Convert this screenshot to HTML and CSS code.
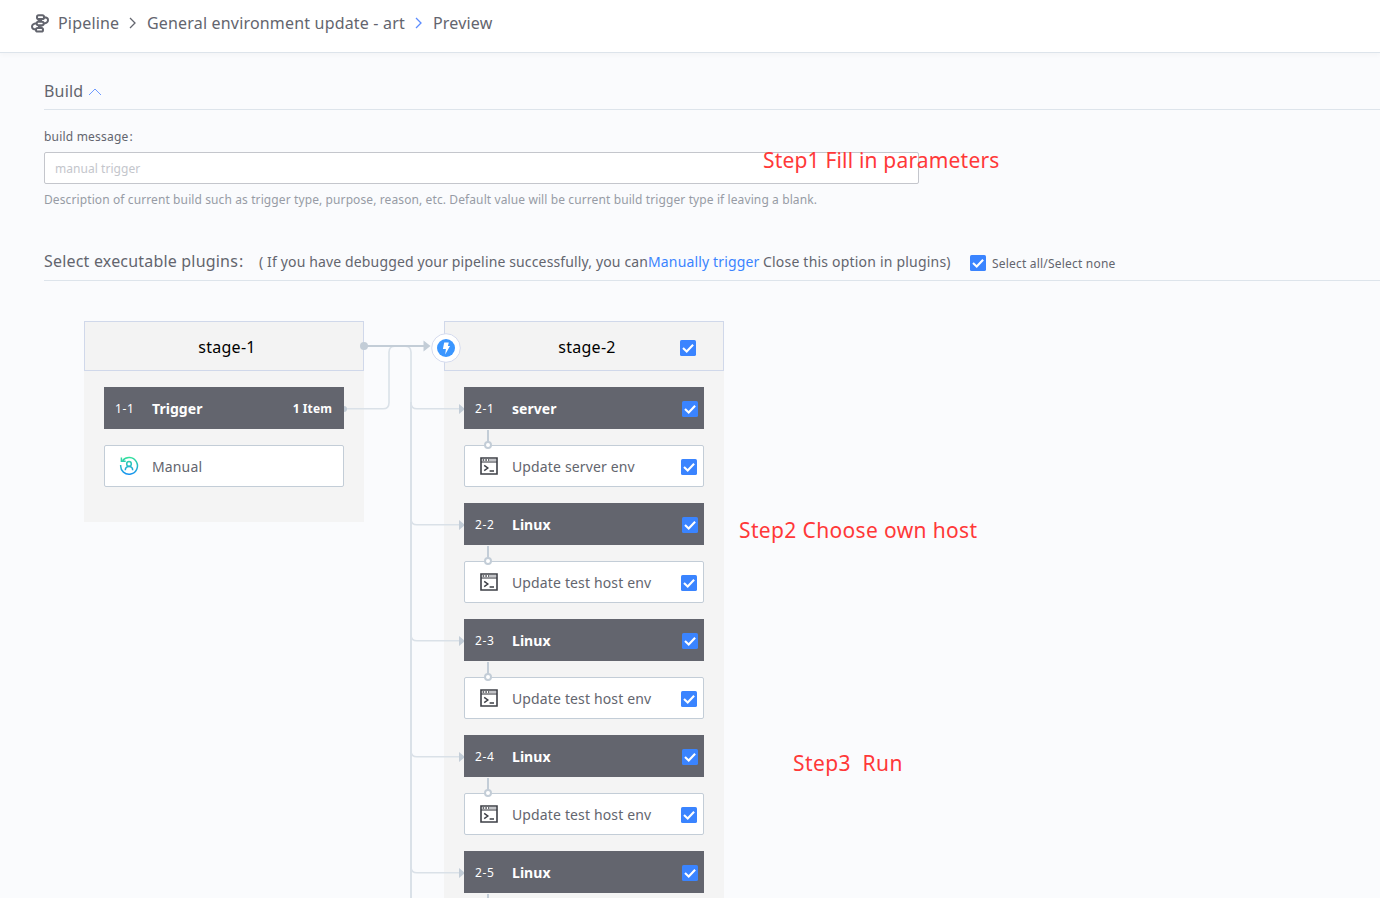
FILE: index.html
```html
<!DOCTYPE html>
<html lang="en">
<head>
<meta charset="utf-8">
<title>Pipeline - Preview</title>
<link rel="stylesheet" href="styles.css">
</head>
<body>
<svg class="defs" width="0" height="0">
  <symbol id="shell" viewBox="0 0 18 18">
    <path d="M1 1h16v16H1z" fill="#fff" stroke="#3e4047" stroke-width="1.6"/>
    <path d="M1 5h16" stroke="#3e4047" stroke-width="1.1"/>
    <path d="M2.6 3h1.6M5.3 3h1.6M8 3h1.4" stroke="#3e4047" stroke-width="1.3"/>
    <path d="M9.6 3H16" stroke="#b4b6bb" stroke-width="1.6"/>
    <path d="M4.2 8.3l3.6 2.7-3.6 2.7M9.6 14h4.4" fill="none" stroke="#3e4047" stroke-width="1.5"/>
  </symbol>
  <symbol id="check" viewBox="0 0 16 16">
    <rect width="16" height="16" rx="1.6" fill="#3a84ff"/>
    <path d="M3 8l3.700 3.500 6.400-6.800" fill="none" stroke="#fff" stroke-width="2.100"/>
  </symbol>
</svg>

<header class="header">
  <svg class="logo" width="18" height="19" viewBox="0 0 18 19" fill="none" stroke="#63656e" stroke-width="2">
    <rect x="6" y="1.300" width="7" height="3.700" rx="1.600"/>
    <rect x="5.700" y="7.800" width="7" height="3.400" rx="1.600"/>
    <rect x="5" y="13.900" width="7" height="3.700" rx="1.600"/>
    <path d="M13 3.200c2.400 0 4 1 4 2.700S15.600 9 12.700 9.500M7 5.600c1 .8 2.500 1 4 1M5.700 9.200C2.600 9.600 1 10.800 1 12.600s1.600 2.900 4 2.900M7 13c1.500-.2 3-.2 4.200.6"/>
  </svg>
  <span class="crumb crumb-root">Pipeline</span>
  <svg class="sep" width="7" height="12" viewBox="0 0 7 12"><path d="M1 1l5 5-5 5" fill="none" stroke="#63656e" stroke-width="1.3"/></svg>
  <span class="crumb crumb-name">General environment update - art</span>
  <svg class="sep" width="7" height="12" viewBox="0 0 7 12"><path d="M1 1l5 5-5 5" fill="none" stroke="#5b8cff" stroke-width="1.3"/></svg>
  <span class="crumb">Preview</span>
</header>

<main class="main">
  <section>
    <h2 class="title build-title">Build
      <svg width="14" height="8" viewBox="0 0 14 8"><path d="M1 7l6-6 6 6" fill="none" stroke="#6f9bff" stroke-width="1"/></svg>
    </h2>
    <label class="label" for="msg">build message<span class="colon">:</span></label>
    <input class="input" id="msg" placeholder="manual trigger">
    <p class="hint">Description of current build such as trigger type, purpose, reason, etc. Default value will be current build trigger type if leaving a blank.</p>
  </section>

  <section>
    <div class="title plugins-title">
      <span class="plugins-name">Select executable plugins<span class="colon">:</span></span>
      <span class="tip"><span class="tip-lead">( If you have debugged your pipeline successfully, you can</span><a class="link">Manually trigger</a><span class="tip-rest">Close this option in plugins)</span></span>
      <span class="all"><svg width="16" height="16"><use href="#check"/></svg><span class="all-text">Select all/Select none</span></span>
    </div>
  </section>

  <div class="pipeline">
    <svg class="wires" width="480" height="608" viewBox="0 290 480 608" fill="none">
      <g stroke="#dae1e8" stroke-width="1.6">
        <path d="M346 408.800h37q6 0 6-6v-50.500q0-6 6-6"/>
        <path d="M405 346.300q6 0 6 6v50.500q0 6 6 6h43"/>
        <path d="M411 402v496" stroke-width="2"/>
        <path d="M411 519q0 5.800 6 5.800h43M411 635q0 5.800 6 5.800h43M411 751q0 5.800 6 5.800h43M411 867q0 5.800 6 5.800h43"/>
      </g>
      <path d="M364 346h62" stroke="#c3cdd7" stroke-width="2"/>
      <g fill="#c3cdd7">
        <circle cx="364" cy="346" r="4"/>
        <circle cx="344" cy="409" r="3"/>
        <path d="M423.500 340.500l7 5.500-7 5.500zM459 404l6 5-6 5zM459 520l6 5-6 5zM459 636l6 5-6 5zM459 752l6 5-6 5zM459 868l6 5-6 5z"/>
      </g>
    </svg>

    <div class="stage">
      <div class="stage-head">stage-1</div>
      <div class="stage-body">
        <div class="job"><span class="num">1-1</span><b class="name">Trigger</b><b class="count">1 Item</b></div>
        <div class="atom">
          <svg class="icon icon-manual" width="20" height="20" viewBox="0 0 20 20" fill="none" stroke="url(#tri)" stroke-width="1.5">
            <defs><linearGradient id="tri" gradientUnits="userSpaceOnUse" x1="0" y1="1" x2="0" y2="19"><stop offset="0" stop-color="#35e29a"/><stop offset="1" stop-color="#1690f5"/></linearGradient></defs>
            <path d="M3.700 4.400A8.400 8.400 0 1 1 1.700 9M6.700 5.300H2.400V1.600"/>
            <circle cx="10" cy="7.900" r="2.300"/><path d="M6.300 14.300c0-5.100 7.400-5.100 7.400 0"/>
          </svg>
          <span class="name">Manual</span>
        </div>
      </div>
    </div>

    <div class="stage">
      <div class="stage-head">stage-2
        <svg class="stage-check" width="16" height="16"><use href="#check"/></svg>
        <svg class="bolt" width="30" height="30" viewBox="0 0 30 30"><circle cx="15" cy="15" r="14.300" fill="#fff" stroke="#d5dbee"/><circle cx="15" cy="15" r="9" fill="#3a96ff"/><path d="M13.200 9.600h4.600l-.9 3.500h2.100l-4.800 8.500.7-5.600h-3z" fill="#fff"/></svg>
      </div>
      <div class="stage-body">
        <div class="job"><span class="num">2-1</span><b class="name">server</b><svg class="box" width="16" height="16"><use href="#check"/></svg></div>
        <div class="atom linked"><svg class="icon" width="18" height="18"><use href="#shell"/></svg><span class="name">Update server env</span><svg class="box" width="16" height="16"><use href="#check"/></svg></div>
        <div class="job"><span class="num">2-2</span><b class="name">Linux</b><svg class="box" width="16" height="16"><use href="#check"/></svg></div>
        <div class="atom linked"><svg class="icon" width="18" height="18"><use href="#shell"/></svg><span class="name">Update test host env</span><svg class="box" width="16" height="16"><use href="#check"/></svg></div>
        <div class="job"><span class="num">2-3</span><b class="name">Linux</b><svg class="box" width="16" height="16"><use href="#check"/></svg></div>
        <div class="atom linked"><svg class="icon" width="18" height="18"><use href="#shell"/></svg><span class="name">Update test host env</span><svg class="box" width="16" height="16"><use href="#check"/></svg></div>
        <div class="job"><span class="num">2-4</span><b class="name">Linux</b><svg class="box" width="16" height="16"><use href="#check"/></svg></div>
        <div class="atom linked"><svg class="icon" width="18" height="18"><use href="#shell"/></svg><span class="name">Update test host env</span><svg class="box" width="16" height="16"><use href="#check"/></svg></div>
        <div class="job job-last"><span class="num">2-5</span><b class="name">Linux</b><svg class="box" width="16" height="16"><use href="#check"/></svg></div>
      </div>
    </div>
  </div>
</main>

<div class="note note-1">Step1 Fill in parameters</div>
<div class="note note-2">Step2 Choose own host</div>
<div class="note note-3">Step3&nbsp; Run</div>
</body>
</html>
```

FILE: styles.css
```css
*, *::before, *::after { box-sizing: border-box; }
body {
  margin: 0;
  height: 898px;
  overflow: hidden;
  position: relative;
  background: #fafbfd;
  color: #63656e;
  font: 14px/20px "Noto Sans", "Noto Sans CJK SC", sans-serif;
}
svg { display: block; flex: none; }
.defs { position: absolute; }

.header {
  display: flex;
  align-items: center;
  height: 53px;
  padding: 0 0 6px 31px;
  background: #fff;
  border-bottom: 1px solid #dde4eb;
  box-shadow: 0 2px 5px rgba(0, 0, 0, .03);
  font-size: 16px;
  letter-spacing: .18px;
  white-space: nowrap;
}
.logo { margin-right: 9px; }
.crumb-root { width: 71px; }
.crumb-name { width: 268px; }
.sep { margin-right: 11px; }

.main { height: 845px; padding-left: 44px; }
.title {
  display: flex;
  margin: 0;
  border-bottom: 1px solid #dde4eb;
  font-size: 16px;
  font-weight: 400;
  letter-spacing: .19px;
  white-space: nowrap;
}
.build-title {
  align-items: center;
  gap: 5px;
  height: 57px;
  padding-top: 20px;
}
.build-title svg { margin-top: 2px; }
.label {
  display: block;
  margin-top: 17px;
  font-size: 12px;
  letter-spacing: .2px;
}
.colon { margin-left: 1px; }
.input {
  display: block;
  width: 875px;
  height: 32px;
  margin-top: 5px;
  padding: 1px 10px 0;
  border: 1px solid #c4c6cc;
  border-radius: 2px;
  background: #fff;
  font: 12px "Noto Sans", sans-serif;
  letter-spacing: .05px;
}
.input::placeholder { color: #c4c6cc; }
.hint {
  margin: 6px 0 0;
  color: #979ba5;
  font-size: 12px;
  letter-spacing: .106px;
  white-space: nowrap;
}

.plugins-title {
  height: 71px;
  align-items: flex-end;
  padding-bottom: 9px;
}
.plugins-name { width: 215px; }
.tip {
  display: flex;
  width: 711px;
  margin-bottom: -1px;
  font-size: 14px;
  letter-spacing: .14px;
}
.tip-lead { width: 389px; }
.link { width: 115px; color: #3a84ff; letter-spacing: .15px; }
.tip-rest { letter-spacing: .2px; }
.all {
  display: flex;
  gap: 6px;
  align-items: center;
  font-size: 12px;
  letter-spacing: .2px;
  height: 16px;
}
.all-text { padding-top: 2px; }

.pipeline {
  position: relative;
  display: flex;
  align-items: flex-start;
  gap: 80px;
  margin-top: 40px;
  padding-left: 40px;
}
.wires { position: absolute; left: -44px; top: -31px; z-index: 1; }
.stage { width: 280px; background: #f4f4f4; }
.stage:last-child { height: 577px; }
.stage:last-child .stage-body { padding-bottom: 0; }
.stage-head {
  position: relative;
  height: 50px;
  padding: 1px 0 0 6px;
  border: 1px solid #d0d8ea;
  background: #f3f3f3;
  color: #000;
  font-size: 16px;
  line-height: 48px;
  letter-spacing: .26px;
  text-align: center;
}
.stage-check { position: absolute; right: 27px; top: 18px; }
.bolt { position: absolute; left: -14px; top: 11px; z-index: 2; }
.stage-body {
  display: flex;
  flex-direction: column;
  gap: 16px;
  padding: 16px 20px 35px;
}
.job, .atom {
  position: relative;
  display: flex;
  align-items: center;
  height: 42px;
}
.job {
  z-index: 2;
  padding: 0 6px 0 11px;
  background: #63656e;
  color: #fff;
}
.box { margin-top: 1px; }
.job .box { margin-top: 2px; }
.num { width: 37px; padding-top: 1px; font-size: 12px; letter-spacing: .6px; }
.name { flex: 1; padding-top: 2px; letter-spacing: .14px; }
b.name { letter-spacing: .05px; }
.count { padding: 1px 6px 0 0; font-size: 12px; letter-spacing: .1px; }
.atom {
  padding: 0 6px 0 15px;
  border: 1px solid #c3cdd7;
  border-radius: 2px;
  background: #fff;
}
.icon { margin-right: 14px; }
.icon-manual { margin: 0 13px 0 -1px; }
.linked::before, .job-last::after {
  content: "";
  position: absolute;
  left: 22px;
  top: -16px;
  width: 2px;
  height: 12px;
  background: #c3cdd7;
}
.job-last::after { left: 23px; top: 43px; height: 4px; }
.linked::after {
  content: "";
  position: absolute;
  left: 19px;
  top: -5px;
  width: 8px;
  height: 8px;
  border: 2px solid #c3cdd7;
  border-radius: 50%;
  background: #fff;
}

.note {
  position: absolute;
  color: #ff3838;
  font-size: 21px;
  line-height: 30px;
  white-space: nowrap;
}
.note-1 { left: 763px; top: 145px; letter-spacing: .18px; }
.note-2 { left: 739px; top: 515px; letter-spacing: .36px; }
.note-3 { left: 793px; top: 748px; letter-spacing: .4px; }
```
